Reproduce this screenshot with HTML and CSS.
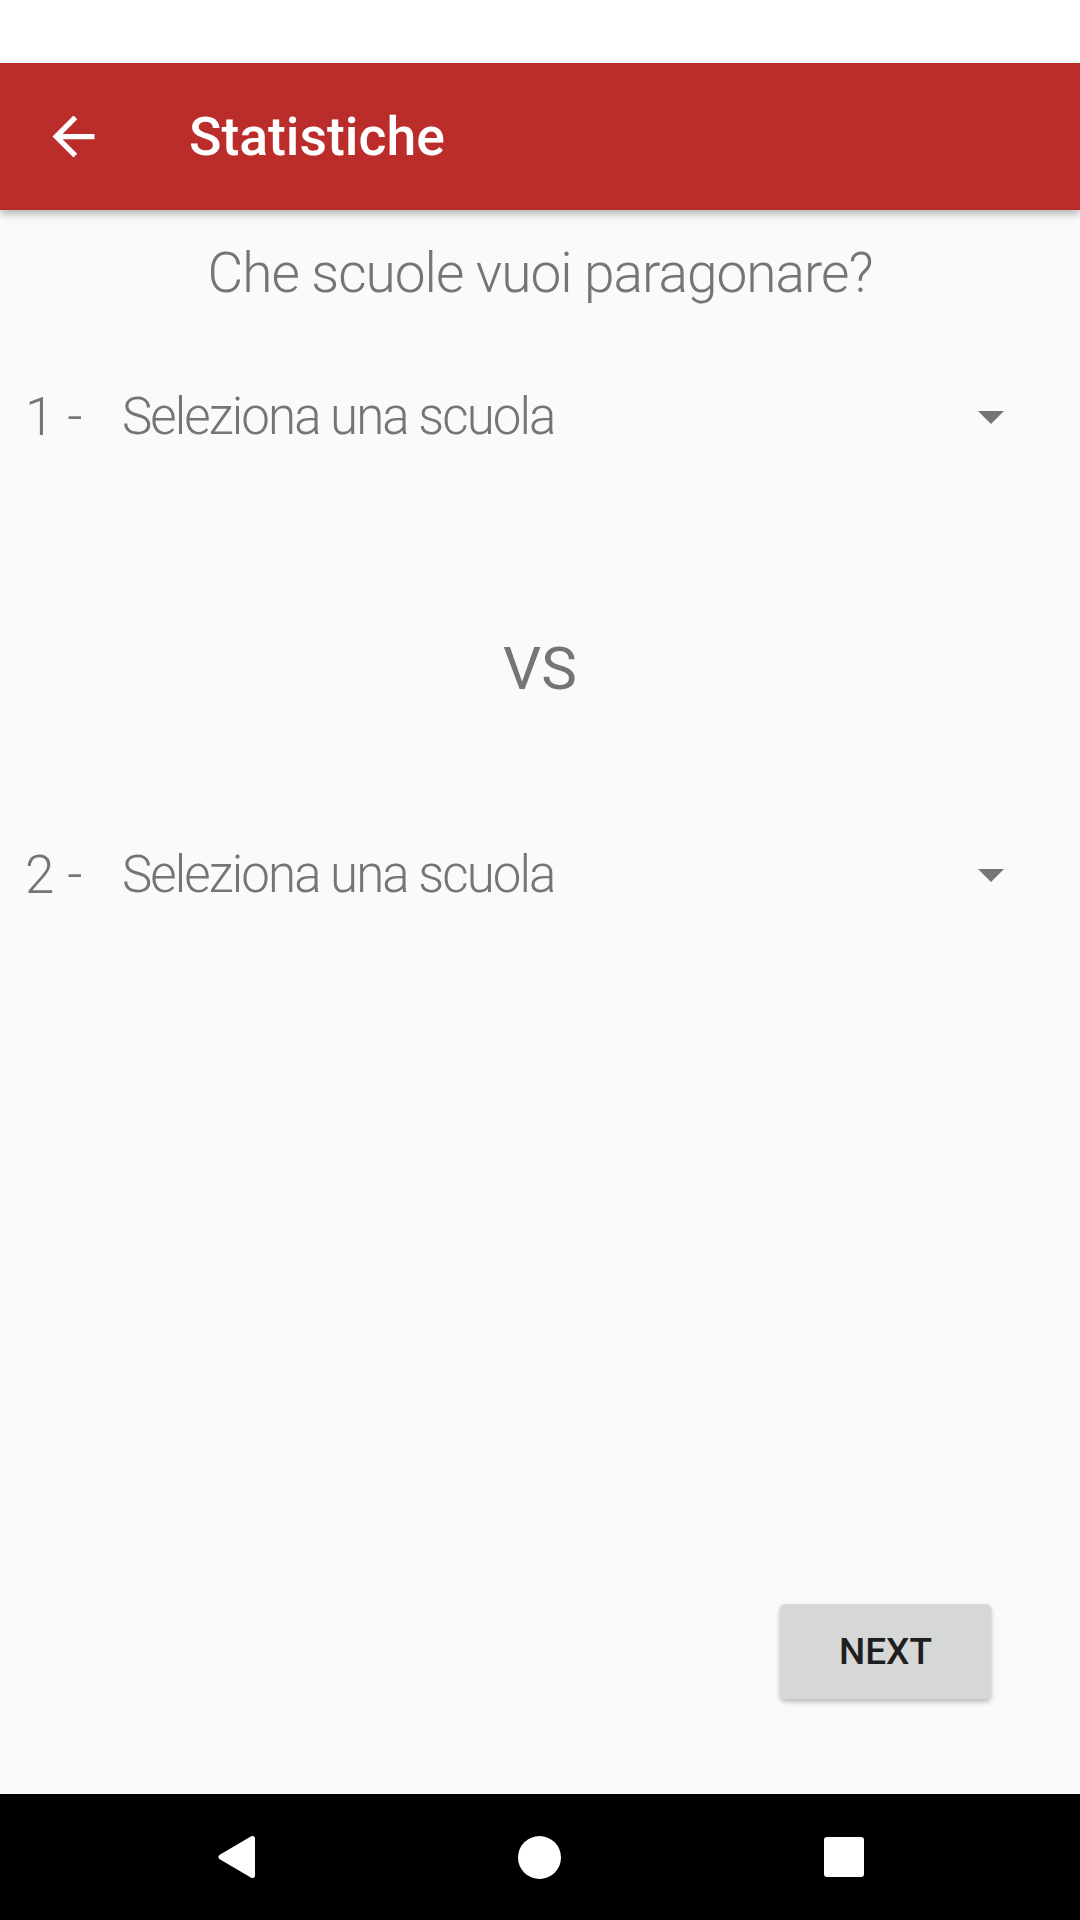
FILE: index.html
```html
<!DOCTYPE html>
<html lang="it">
<head>
<meta charset="utf-8">
<title>Statistiche</title>
<link rel="stylesheet" href="styles.css">
</head>
<body>
<div class="screen">
  <div class="status"></div>
  <header class="appbar">
    <svg class="back" viewBox="0 0 24 24" width="63" height="63"><path fill="#fff" d="M20 11H7.83l5.59-5.59L12 4l-8 8 8 8 1.41-1.41L7.83 13H20v-2z"/></svg>
    <h1 class="title">Statistiche</h1>
  </header>
  <main class="content">
    <p class="question">Che scuole vuoi paragonare?</p>
    <div class="pick pick-first">
      <span class="num">1 -</span>
      <span class="spinner">Seleziona una scuola</span>
      <span class="caret"></span>
    </div>
    <p class="vs">VS</p>
    <div class="pick pick-second">
      <span class="num">2 -</span>
      <span class="spinner">Seleziona una scuola</span>
      <span class="caret"></span>
    </div>
    <div class="spacer"></div>
    <div class="actions">
      <button class="next">NEXT</button>
    </div>
  </main>
  <nav class="navbar">
    <svg class="nav-back" viewBox="0 0 38 42" width="38" height="42"><path d="M35.5 2.5 L35.5 39.5 L4 21 Z" fill="#fff" stroke="#fff" stroke-width="5" stroke-linejoin="round"/></svg>
    <span class="nav-home"></span>
    <span class="nav-recent"></span>
  </nav>
</div>
</body>
</html>
```

FILE: styles.css
```css
html, body {
  margin: 0;
  padding: 0;
}
body {
  font-family: Roboto, "Noto Sans", "Liberation Sans", sans-serif;
  background: #fafafa;
}
.screen {
  width: 1080px;
  height: 1920px;
  display: flex;
  flex-direction: column;
  overflow: hidden;
}
.status {
  height: 63px;
  background: #ffffff;
  flex: none;
}
.appbar {
  height: 147px;
  flex: none;
  background: #ba2d2b;
  display: flex;
  align-items: center;
  box-shadow: 0 4px 8px rgba(0, 0, 0, 0.28);
  position: relative;
  z-index: 2;
}
.back {
  margin-left: 42px;
  flex: none;
}
.title {
  margin: 0 0 0 84px;
  font-size: 53.5px;
  font-weight: 500;
  color: #ffffff;
  line-height: 62px;
}
.content {
  flex: 1;
  display: flex;
  flex-direction: column;
  background: #fafafa;
}
.question {
  margin: 31px 0 0;
  text-align: center;
  font-size: 55px;
  font-weight: 300;
  letter-spacing: -1px;
  line-height: 64px;
  color: #757575;
}
.pick {
  display: flex;
  align-items: center;
  height: 62px;
  font-weight: 300;
  line-height: 62px;
  color: #757575;
}
.pick-first {
  margin-top: 81px;
}
.pick-second {
  margin-top: 140px;
}
.num {
  width: 97px;
  padding-left: 25px;
  flex: none;
  font-size: 53px;
}
.spinner {
  flex: 1;
  font-size: 51px;
  letter-spacing: -1.9px;
}
.caret {
  flex: none;
  width: 0;
  height: 0;
  border-left: 13px solid transparent;
  border-right: 13px solid transparent;
  border-top: 13px solid #757575;
  margin-right: 76px;
}
.vs {
  margin: 186px 0 0;
  text-align: center;
  font-size: 60px;
  font-weight: 400;
  line-height: 70px;
  color: #757575;
}
.spacer {
  flex: 1;
}
.actions {
  display: flex;
  justify-content: flex-end;
  padding-right: 89px;
  margin-bottom: 95px;
}
.next {
  width: 211px;
  height: 95px;
  border: none;
  border-radius: 5px;
  background: #d6d7d7;
  box-shadow: 0 3px 5px rgba(0, 0, 0, 0.26);
  font-family: Roboto, "Noto Sans", sans-serif;
  font-size: 37px;
  font-weight: 500;
  color: #1f1f1f;
  padding: 0;
}
.navbar {
  height: 126px;
  flex: none;
  background: #000000;
  display: flex;
  align-items: center;
  justify-content: center;
  gap: 263px;
}
.nav-back {
  display: block;
}
.nav-home {
  width: 43px;
  height: 43px;
  border-radius: 50%;
  background: #ffffff;
}
.nav-recent {
  width: 40px;
  height: 40px;
  border-radius: 3px;
  background: #ffffff;
}
```
